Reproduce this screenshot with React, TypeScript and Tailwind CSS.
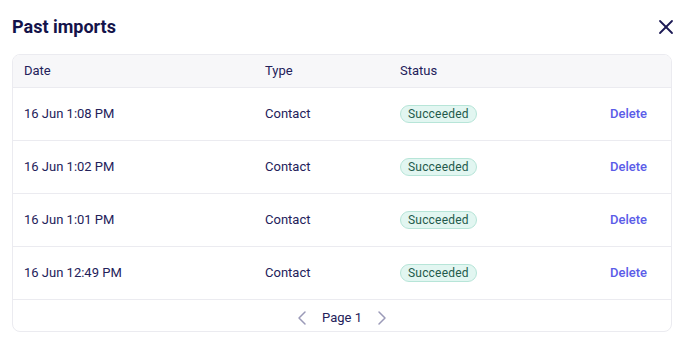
import { ChevronLeft, ChevronRight, X } from 'lucide-react';

interface ImportRow {
  date: string;
  type: string;
  status: string;
}

const rows: ImportRow[] = [
  { date: '16 Jun 1:08 PM', type: 'Contact', status: 'Succeeded' },
  { date: '16 Jun 1:02 PM', type: 'Contact', status: 'Succeeded' },
  { date: '16 Jun 1:01 PM', type: 'Contact', status: 'Succeeded' },
  { date: '16 Jun 12:49 PM', type: 'Contact', status: 'Succeeded' },
];

export default function App() {
  return (
    <div className="w-[688px] h-[345px] bg-white pl-3 text-[#23215a] font-['Roboto',sans-serif]">
      <div className="w-[660px]">
        <div className="flex items-center justify-between h-[54px]">
          <h1 className="text-[18px] font-bold text-[#14134a] -mt-[2px]">Past imports</h1>
          <button className="text-[#1c1a55] -mr-[6px] -mt-[1px]">
            <X className="h-[24px] w-[24px]" strokeWidth={1.8} />
          </button>
        </div>

        <div className="border border-[#ebebf0] rounded-lg overflow-hidden">
          <div className="grid grid-cols-[241px_135px_1fr_auto] items-center h-[32px] pl-[11px] pr-[24px] bg-[#f7f7f9] text-[13px]">
            <span>Date</span>
            <span>Type</span>
            <span>Status</span>
            <span />
          </div>

          {rows.map((row, i) => (
            <div
              key={i}
              className="grid grid-cols-[241px_135px_1fr_auto] items-center h-[53px] pl-[11px] pr-[24px] border-t border-[#ebebf0] text-[13px]"
            >
              <span>{row.date}</span>
              <span>{row.type}</span>
              <span>
                <span className="inline-flex items-center h-[18px] px-[7px] rounded-full border border-[#b7e5d8] bg-[#e2f6f1] text-[#245a4b] text-[12px] tracking-[0.2px]">
                  {row.status}
                </span>
              </span>
              <button className="text-[#5b5ce8] font-medium text-[13px]">Delete</button>
            </div>
          ))}

          <div className="flex items-center justify-center gap-[8px] h-[32px] pt-[6px] pb-[1px] border-t border-[#ebebf0] text-[13px]">
            <ChevronLeft className="h-[24px] w-[24px] text-[#9b9ab8]" strokeWidth={1.5} />
            <span>Page 1</span>
            <ChevronRight className="h-[24px] w-[24px] text-[#9b9ab8]" strokeWidth={1.5} />
          </div>
        </div>
      </div>
    </div>
  );
}
